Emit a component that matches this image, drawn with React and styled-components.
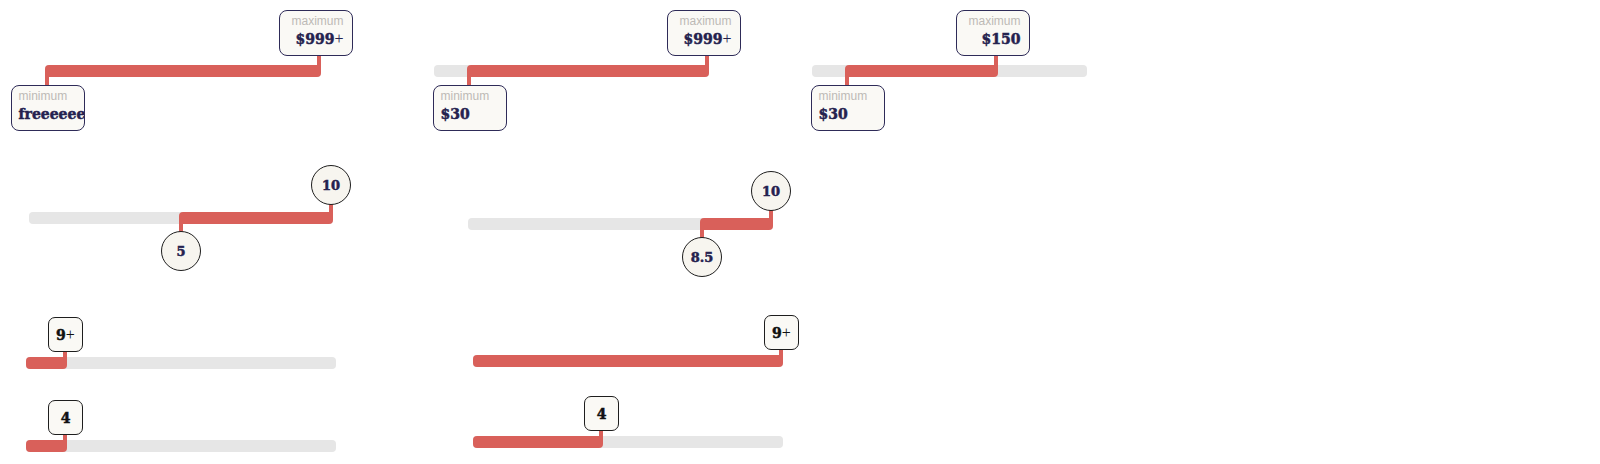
import React from "react";
import styled, { createGlobalStyle } from "styled-components";

const RED = "#d9605a";
const NAVY = "#25224f";
const CREAM = "#faf9f5";

const GlobalStyle = createGlobalStyle`
  body {
    margin: 0;
    background: #fff;
  }
`;

const Page = styled.div`
  display: flex;
  flex-direction: column;
  width: 1600px;
  height: 464px;
  overflow: hidden;
`;

const Row = styled.div`
  display: flex;
  align-items: flex-start;
  height: ${(p) => p.$h}px;
  flex-shrink: 0;
`;

// the grey track; the fill, stems and thumbs hang off it
const Track = styled.div`
  position: relative;
  flex-shrink: 0;
  margin-left: ${(p) => p.$ml}px;
  margin-top: ${(p) => p.$mt}px;
  width: ${(p) => p.$w}px;
  height: 12px;
  border-radius: 4px;
  background: #e6e6e6;
`;

const Fill = styled.div`
  position: absolute;
  top: 0;
  height: 12px;
  left: ${(p) => p.$from}px;
  width: ${(p) => p.$to - p.$from}px;
  border-radius: 4px;
  background: ${RED};
`;

const Stem = styled.div`
  position: absolute;
  width: 4px;
  left: ${(p) => p.$x}px;
  top: ${(p) => p.$top}px;
  height: ${(p) => p.$h}px;
  background: ${RED};
`;

const PriceBox = styled.div`
  position: absolute;
  left: ${(p) => p.$x}px;
  top: ${(p) => p.$y}px;
  width: 74px;
  height: 46px;
  box-sizing: border-box;
  padding: 3px 8px 0 7px;
  border: 1px solid #2e2b58;
  border-radius: 8px;
  background: ${CREAM};
  text-align: ${(p) => p.$align};
  overflow: hidden;
  white-space: nowrap;
`;

const Label = styled.div`
  font-family: "Liberation Sans", Arial, sans-serif;
  font-size: 12px;
  line-height: 14px;
  color: #bdb9b6;
`;

const Value = styled.div`
  margin-top: 1px;
  font-family: "DejaVu Serif", "Liberation Serif", serif;
  font-weight: 700;
  font-size: 14px;
  line-height: 20px;
  color: ${NAVY};
  -webkit-text-stroke: 0.5px currentColor;
`;

const Plus = styled.span`
  font-family: "Liberation Serif", serif;
  font-weight: 400;
  font-size: 16px;
  -webkit-text-stroke: 0;
`;

const Dot = styled.div`
  position: absolute;
  left: ${(p) => p.$x}px;
  top: ${(p) => p.$y}px;
  width: 40px;
  height: 40px;
  box-sizing: border-box;
  border: 1px solid #1e1e1e;
  border-radius: 50%;
  background: #f7f5ef;
  display: flex;
  align-items: center;
  justify-content: center;
  font-family: "DejaVu Serif", "Liberation Serif", serif;
  font-weight: 700;
  font-size: 13px;
  color: ${NAVY};
  -webkit-text-stroke: 0.5px currentColor;
`;

const Tag = styled.div`
  position: absolute;
  left: ${(p) => p.$x}px;
  top: ${(p) => p.$y}px;
  width: 35px;
  height: 35px;
  box-sizing: border-box;
  border: 1px solid #1e1e1e;
  border-radius: 7px;
  background: ${CREAM};
  display: flex;
  align-items: center;
  justify-content: center;
  font-family: "DejaVu Serif", "Liberation Serif", serif;
  font-weight: 700;
  font-size: 14px;
  color: #111;
  -webkit-text-stroke: 0.5px currentColor;
`;

const Amount = ({ text }) =>
  text.endsWith("+") ? (
    <>
      {text.slice(0, -1)}
      <Plus>+</Plus>
    </>
  ) : (
    text
  );

const PriceSlider = ({ ml, mt, w, from, to, min, max }) => (
  <Track $ml={ml} $mt={mt} $w={w}>
    <Fill $from={from} $to={to} />
    <Stem $x={to - 4} $top={-9} $h={15} />
    <Stem $x={from} $top={6} $h={14} />
    <PriceBox $x={to - 42.5} $y={-55} $align="right">
      <Label>maximum</Label>
      <Value>
        <Amount text={max} />
      </Value>
    </PriceBox>
    <PriceBox $x={from - 34.5} $y={20} $align="left">
      <Label>minimum</Label>
      <Value>
        <Amount text={min} />
      </Value>
    </PriceBox>
  </Track>
);

const ScoreSlider = ({ ml, mt, w, from, to, min, max }) => (
  <Track $ml={ml} $mt={mt} $w={w}>
    <Fill $from={from} $to={to} />
    <Stem $x={to - 4} $top={-8} $h={14} />
    <Stem $x={from} $top={6} $h={14} />
    <Dot $x={to - 22} $y={-47}>{max}</Dot>
    <Dot $x={from - 18} $y={19}>{min}</Dot>
  </Track>
);

const CountSlider = ({ ml, mt, w, to, value }) => (
  <Track $ml={ml} $mt={mt} $w={w}>
    <Fill $from={0} $to={to} />
    <Stem $x={to - 4} $top={-6} $h={12} />
    <Tag $x={to - 19} $y={-40}>
      <Amount text={value} />
    </Tag>
  </Track>
);

const App = () => (
  <>
    <GlobalStyle />
    <Page>
      <Row $h={140}>
        <PriceSlider ml={45} mt={65} w={276} from={0} to={276} min="freeeeeeeeeeee" max="$999+" />
        <PriceSlider ml={113} mt={65} w={275} from={33} to={275} min="$30" max="$999+" />
        <PriceSlider ml={103} mt={65} w={275} from={33} to={186} min="$30" max="$150" />
      </Row>
      <Row $h={160}>
        <ScoreSlider ml={29} mt={72} w={304} from={150} to={304} min="5" max="10" />
        <ScoreSlider ml={135} mt={78} w={305} from={232} to={305} min="8.5" max="10" />
      </Row>
      <Row $h={80}>
        <CountSlider ml={26} mt={57} w={310} to={41} value="9+" />
        <CountSlider ml={137} mt={55} w={310} to={310} value="9+" />
      </Row>
      <Row $h={84}>
        <CountSlider ml={26} mt={60} w={310} to={41} value="4" />
        <CountSlider ml={137} mt={56} w={310} to={130} value="4" />
      </Row>
    </Page>
  </>
);

export default App;
